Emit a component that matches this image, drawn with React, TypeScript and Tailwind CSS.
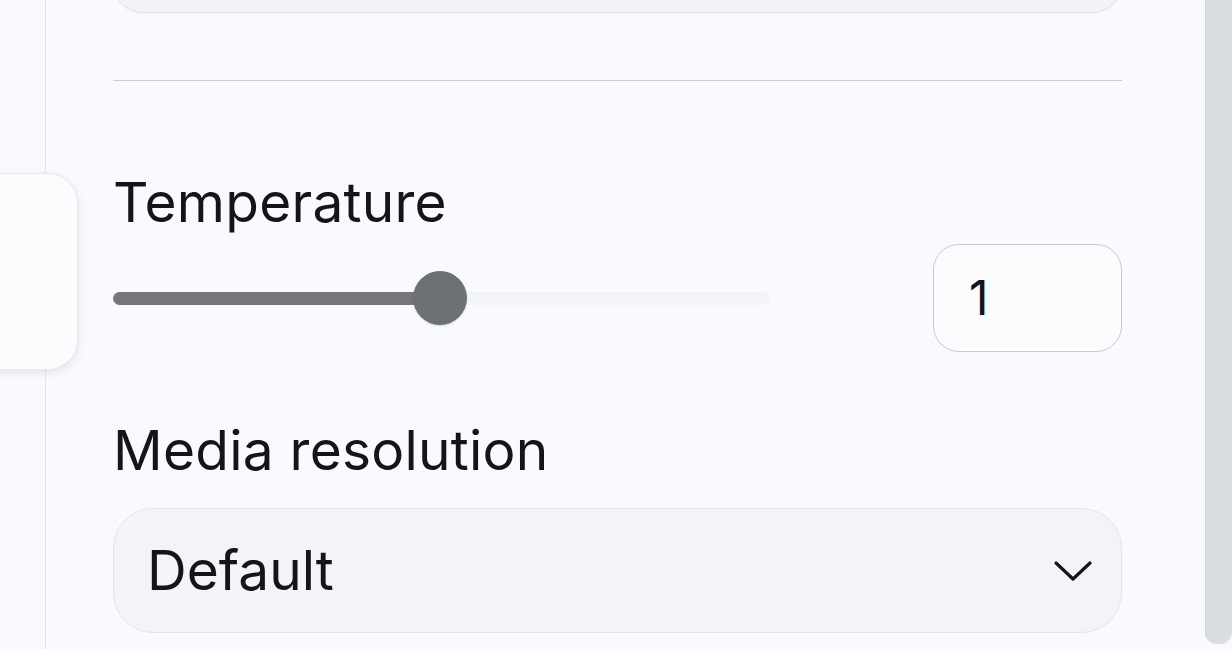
import React from "react";

export default function App() {
  return (
    <div
      className="relative w-[1232px] h-[649px] overflow-hidden bg-[#f8fafd] flex text-[#15131c]"
      style={{ fontFamily: "Inter, 'Noto Sans', sans-serif" }}
    >
      {/* left rail */}
      <div className="w-[46px] shrink-0 border-r border-[#e3e6ea] h-full" />
      {/* floating tab over rail */}
      <div className="absolute left-[-40px] top-[173px] w-[118px] h-[197px] rounded-[30px] bg-[#fbfcfe] border border-[#e6e9ed] shadow-[0_3px_10px_rgba(0,0,0,0.09)]" />

      {/* main content */}
      <div className="flex-1 pl-[67px] pr-[83px] flex flex-col">
        <div className="h-[60px] -mt-[47px] rounded-[30px] bg-[#f1f3f6] border border-[#e2e5e9] shadow-[0_1px_2px_rgba(0,0,0,0.04)]" />
        <div className="mt-[67px] h-px bg-[#c9cdd3]" />

        <div className="mt-[88px] text-[55px] leading-[66px] tracking-[0.25px]">Temperature</div>

        <div className="mt-[9px] flex items-center justify-between h-[108px]">
          <div className="relative w-[657px] h-[54px] flex items-center">
            <div className="w-full h-[13px] rounded-full bg-[#f2f4f7]" />
            <div className="absolute left-0 w-[327px] h-[13px] rounded-full bg-[#75767b]" />
            <div className="absolute left-[300px] w-[54px] h-[54px] rounded-full bg-[#6d7075] shadow-[0_1px_2px_rgba(0,0,0,0.15)]" />
          </div>
          <div className="w-[189px] h-[108px] rounded-[26px] border border-[#c6cacf] bg-[#fbfcfe] flex items-center pl-[35px] text-[48px]">
            1
          </div>
        </div>

        <div className="mt-[65px] text-[55px] leading-[66px] tracking-[0.25px]">Media resolution</div>

        <div className="mt-[25px] h-[125px] rounded-[40px] bg-[#f2f4f7] border border-[#e3e6ea] flex items-center justify-between pl-[33px] pr-[28px]">
          <span className="text-[55px] leading-none">Default</span>
          <svg width="40" height="24" viewBox="0 0 40 24" fill="none">
            <polyline points="3,4 20,20 37,4" stroke="#15131c" strokeWidth="3.2" strokeLinecap="round" strokeLinejoin="round" />
          </svg>
        </div>
      </div>

      {/* scrollbar */}
      <div className="w-[27px] shrink-0 h-[644px] bg-[#dadde1] border-l border-[#cfd2d6] rounded-b-[12px]" />
    </div>
  );
}
